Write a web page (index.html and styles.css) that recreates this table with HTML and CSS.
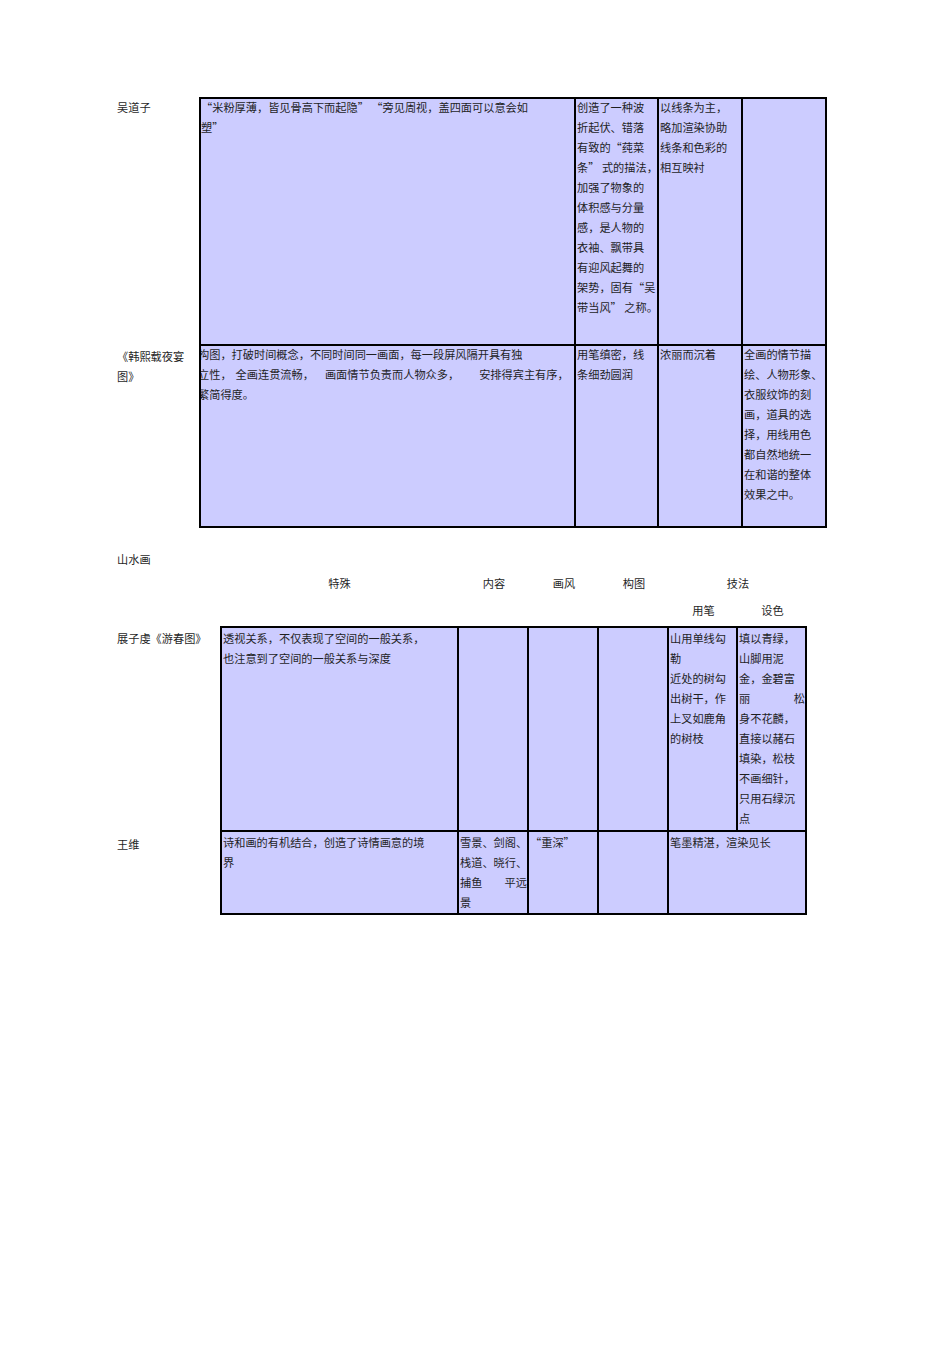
FILE: index.html
```html
<!DOCTYPE html>
<html lang="zh-CN">
<head>
<meta charset="utf-8">
<title>人物画与山水画</title>
<link rel="stylesheet" href="styles.css">
</head>
<body>
<div class="page">
  <div class="grid t1">
    <div class="label">吴道子</div>
    <div class="cell top first wide">
      <div class="ln">“米粉厚薄，皆见骨高下而起隐” “旁见周视，盖四面可以意会如</div>
      <div class="ln">塑”</div>
    </div>
    <div class="cell top">
      <div class="ln">创造了一种波</div>
      <div class="ln">折起伏、错落</div>
      <div class="ln">有致的“莼菜</div>
      <div class="ln">条” 式的描法，</div>
      <div class="ln">加强了物象的</div>
      <div class="ln">体积感与分量</div>
      <div class="ln">感，是人物的</div>
      <div class="ln">衣袖、飘带具</div>
      <div class="ln">有迎风起舞的</div>
      <div class="ln">架势，固有“吴</div>
      <div class="ln">带当风” 之称。</div>
    </div>
    <div class="cell top">
      <div class="ln">以线条为主，</div>
      <div class="ln">略加渲染协助</div>
      <div class="ln">线条和色彩的</div>
      <div class="ln">相互映衬</div>
    </div>
    <div class="cell top"></div>

    <div class="label">
      <div class="ln">《韩熙载夜宴</div>
      <div class="ln">图》</div>
    </div>
    <div class="cell first wide clip">
      <div class="ln">构图，打破时间概念，不同时间同一画面，每一段屏风隔开具有独</div>
      <div class="ln">立性，<span class="g1">全画连贯流畅，</span><span class="g2">画面情节负责而人物众多，</span><span class="g3">安排得宾主有序，</span></div>
      <div class="ln">繁简得度。</div>
    </div>
    <div class="cell">
      <div class="ln">用笔缜密，线</div>
      <div class="ln">条细劲圆润</div>
    </div>
    <div class="cell">
      <div class="ln">浓丽而沉着</div>
    </div>
    <div class="cell">
      <div class="ln">全画的情节描</div>
      <div class="ln">绘、人物形象、</div>
      <div class="ln">衣服纹饰的刻</div>
      <div class="ln">画，道具的选</div>
      <div class="ln">择，用线用色</div>
      <div class="ln">都自然地统一</div>
      <div class="ln">在和谐的整体</div>
      <div class="ln">效果之中。</div>
    </div>
  </div>

  <div class="section-title">山水画</div>

  <div class="grid t2">
    <div class="hd"></div>
    <div class="hd">特殊</div>
    <div class="hd">内容</div>
    <div class="hd">画风</div>
    <div class="hd">构图</div>
    <div class="hd span2">技法</div>

    <div class="hd2"></div>
    <div class="hd2"></div>
    <div class="hd2"></div>
    <div class="hd2"></div>
    <div class="hd2"></div>
    <div class="hd2">用笔</div>
    <div class="hd2">设色</div>

    <div class="label">展子虔《游春图》</div>
    <div class="cell top first">
      <div class="ln">透视关系，不仅表现了空间的一般关系，</div>
      <div class="ln">也注意到了空间的一般关系与深度</div>
    </div>
    <div class="cell top"></div>
    <div class="cell top"></div>
    <div class="cell top"></div>
    <div class="cell top">
      <div class="ln">山用单线勾</div>
      <div class="ln">勒</div>
      <div class="ln">近处的树勾</div>
      <div class="ln">出树干，作</div>
      <div class="ln">上叉如鹿角</div>
      <div class="ln">的树枝</div>
    </div>
    <div class="cell top">
      <div class="ln">填以青绿，</div>
      <div class="ln">山脚用泥</div>
      <div class="ln">金，金碧富</div>
      <div class="ln just"><span>丽</span><span>松</span></div>
      <div class="ln">身不花麟，</div>
      <div class="ln">直接以赭石</div>
      <div class="ln">填染，松枝</div>
      <div class="ln">不画细针，</div>
      <div class="ln">只用石绿沉</div>
      <div class="ln">点</div>
    </div>

    <div class="label">王维</div>
    <div class="cell first">
      <div class="ln">诗和画的有机结合，创造了诗情画意的境</div>
      <div class="ln">界</div>
    </div>
    <div class="cell">
      <div class="ln just"><span>雪景、</span><span>剑阁、</span></div>
      <div class="ln just"><span>栈道、</span><span>晓行、</span></div>
      <div class="ln just"><span>捕鱼</span><span>平远</span></div>
      <div class="ln">景</div>
    </div>
    <div class="cell">
      <div class="ln">“重深”</div>
    </div>
    <div class="cell"></div>
    <div class="cell span2">
      <div class="ln">笔墨精湛，渲染见长</div>
    </div>
  </div>
</div>
</body>
</html>
```

FILE: styles.css
```css
html, body {
  margin: 0;
  padding: 0;
  background: #ffffff;
}

body {
  font-family: "Noto Sans CJK SC", "Liberation Serif", sans-serif;
  font-size: 11.2px;
  line-height: 20px;
  color: #1f1f1f;
}

.page {
  padding: 97px 0 0 117px;
}

.grid {
  display: grid;
}

.t1 {
  grid-template-columns: 82px 377px 83px 84px 84px;
  grid-template-rows: 249px 182px;
}

.t2 {
  grid-template-columns: 103px 239px 70px 70px 70px 69px 69px;
  grid-template-rows: 27px 26px 206px 83px;
}

.label {
  padding: 0;
}

.t2 .label {
  padding-top: 2px;
}

.cell {
  box-sizing: border-box;
  background: #ccccff;
  border-right: 2px solid #000000;
  border-bottom: 2px solid #000000;
  padding: 0 0 0 1px;
  overflow: hidden;
}

.t1 .cell > .ln:first-child {
  margin-top: -2px;
}

.cell.top {
  border-top: 2px solid #000000;
}

.cell.first {
  border-left: 2px solid #000000;
}

.t1 .cell.first {
  padding-left: 0;
}

.clip .ln {
  margin-left: -3px;
}

.ln {
  white-space: nowrap;
}

.just {
  display: flex;
  justify-content: space-between;
}

.g1 { margin-left: 4px; }
.g2 { margin-left: 11px; }
.g3 { margin-left: 20px; }

.span2 {
  grid-column: span 2;
}

.hd, .hd2 {
  text-align: center;
}

.section-title {
  margin: 21px 0 4px 0;
  height: 20px;
}
```
